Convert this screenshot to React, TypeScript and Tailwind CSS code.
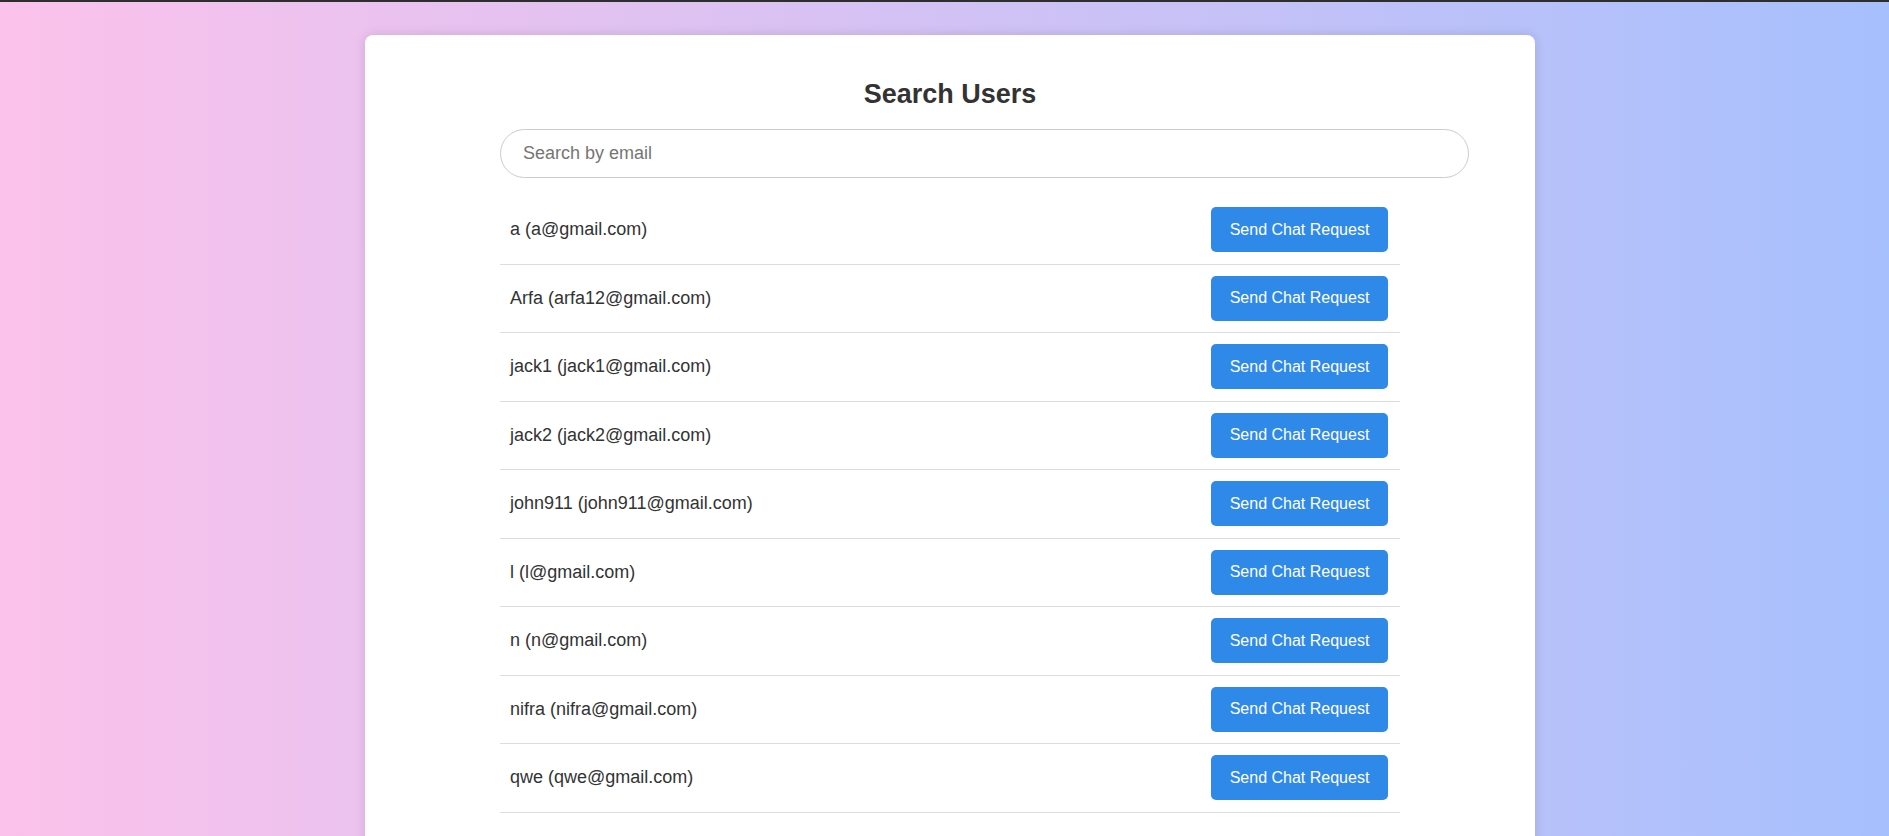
import React, { useState } from 'react'

type User = { name: string; email: string }

const users: User[] = [
  { name: 'a', email: 'a@gmail.com' },
  { name: 'Arfa', email: 'arfa12@gmail.com' },
  { name: 'jack1', email: 'jack1@gmail.com' },
  { name: 'jack2', email: 'jack2@gmail.com' },
  { name: 'john911', email: 'john911@gmail.com' },
  { name: 'l', email: 'l@gmail.com' },
  { name: 'n', email: 'n@gmail.com' },
  { name: 'nifra', email: 'nifra@gmail.com' },
  { name: 'qwe', email: 'qwe@gmail.com' },
]

const UserRow = ({ user }: { user: User }) => {
  return (
    <li className="flex h-[68.5px] items-center justify-between border-b border-[#dddddd] pl-[10px] pr-[12px]">
      <span className="text-[18px] text-[#333333]">
        {user.name} ({user.email})
      </span>
      <button className="h-[45px] w-[177px] rounded-[5px] bg-[#2f89e8] text-[16px] text-white">
        Send Chat Request
      </button>
    </li>
  )
}

const App = () => {
  const [query, setQuery] = useState<string>('')

  const filtered = users.filter((u) => u.email.toLowerCase().includes(query.toLowerCase()))

  return (
    <div
      className="h-screen overflow-hidden border-t-2 border-[#2e2e2e] bg-gradient-to-r from-[#fbc2eb] to-[#a6c0fd] pl-[11px] pt-[33px]"
      style={{ fontFamily: '"Liberation Sans", Arial, sans-serif' }}
    >
      <div className="mx-auto flex w-[1170px] flex-col items-start rounded-lg bg-white px-[135px] pt-[44px] pb-10 shadow-[0_0_12px_rgba(0,0,0,0.12)]">
        <h2 className="w-[900px] text-center text-[27px] font-bold leading-[30px] text-[#333333]">
          Search Users
        </h2>
        <input
          value={query}
          onChange={(e) => setQuery(e.target.value)}
          placeholder="Search by email"
          className="mt-[20px] h-[49px] w-[969px] shrink-0 rounded-full border border-[#cccccc] px-[22px] text-[18px] text-[#333333] placeholder:text-[#757575] focus:outline-none"
        />
        <ul className="mt-[18px] w-[900px]">
          {filtered.map((u) => (
            <UserRow key={u.email} user={u} />
          ))}
        </ul>
      </div>
    </div>
  )
}

export default App
